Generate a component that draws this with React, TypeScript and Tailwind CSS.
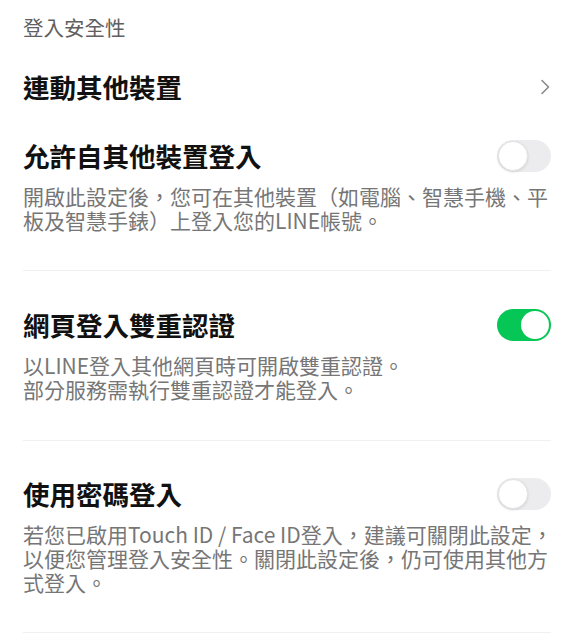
import React from "react";

const FONT = { fontFamily: '"Noto Sans CJK TC", "Noto Sans", sans-serif' };

function Toggle({ on }: { on: boolean }) {
  return on ? (
    <div className="w-[54px] h-[32px] rounded-full bg-[#06c755] flex items-center justify-end pr-[2px] shrink-0">
      <div className="w-[28px] h-[28px] rounded-full bg-white" />
    </div>
  ) : (
    <div className="w-[54px] h-[32px] rounded-full bg-[#ececee] flex items-center pl-[1px] shrink-0">
      <div className="w-[30px] h-[30px] rounded-full bg-white border border-[#e4e4e4] shadow-[0_1px_3px_rgba(0,0,0,0.12)]" />
    </div>
  );
}

function Section({
  title,
  on,
  lines,
  pt,
  pb,
}: {
  title: string;
  on: boolean;
  lines: string[];
  pt: string;
  pb: string;
}) {
  return (
    <div className={`${pt} ${pb} border-b border-[#f0f0f0]`}>
      <div className="flex items-center justify-between h-[32px]">
        <div className="text-[26.5px] leading-[32px] font-bold text-[#111111]">{title}</div>
        <Toggle on={on} />
      </div>
      <div className="mt-[12px] text-[21px] leading-[24px] text-[#767676] whitespace-nowrap">
        {lines.map((l, i) => (
          <div key={i} className="h-[24px]">{l}</div>
        ))}
      </div>
    </div>
  );
}

export default function App() {
  return (
    <div className="w-[574px] h-[640px] bg-white px-[23px] overflow-hidden" style={FONT}>
      <div className="h-[54px] flex items-center text-[20.5px] text-[#606060]">登入安全性</div>
      <div className="h-[66px] flex items-center justify-between">
        <div className="text-[26.5px] leading-[32px] font-bold text-[#111111]">連動其他裝置</div>
        <svg width="10" height="16" viewBox="0 0 10 16" className="mr-[1px]">
          <path d="M2 1.5 L8.5 8 L2 14.5" fill="none" stroke="#8a8a8a" strokeWidth="1.6" strokeLinecap="round" strokeLinejoin="round" />
        </svg>
      </div>
      <Section
        title="允許自其他裝置登入"
        on={false}
        pt="pt-[20px]"
        pb="pb-[38px]"
        lines={["開啟此設定後，您可在其他裝置（如電腦、智慧手機、平", "板及智慧手錶）上登入您的LINE帳號。"]}
      />
      <Section
        title="網頁登入雙重認證"
        on={true}
        pt="pt-[38px]"
        pb="pb-[39px]"
        lines={["以LINE登入其他網頁時可開啟雙重認證。", "部分服務需執行雙重認證才能登入。"]}
      />
      <Section
        title="使用密碼登入"
        on={false}
        pt="pt-[37px]"
        pb="pb-[38px]"
        lines={[
          "若您已啟用Touch ID / Face ID登入，建議可關閉此設定，",
          "以便您管理登入安全性。關閉此設定後，仍可使用其他方",
          "式登入。",
        ]}
      />
    </div>
  );
}
